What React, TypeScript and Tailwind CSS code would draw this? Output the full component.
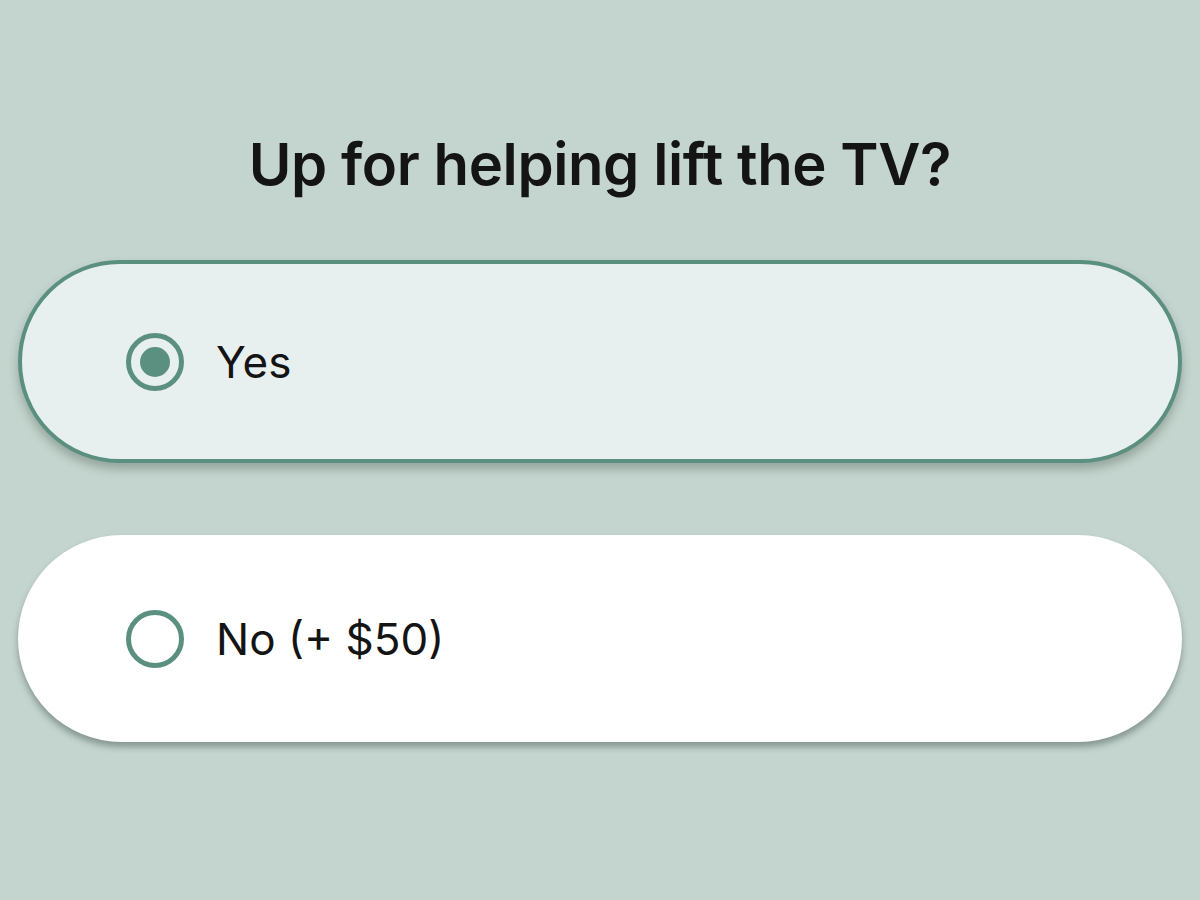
import { useState } from "react";

type Option = {
  id: string;
  label: string;
};

const options: Option[] = [
  { id: "yes", label: "Yes" },
  { id: "no", label: "No (+ $50)" },
];

function RadioDot({ checked }: { checked: boolean }) {
  return (
    <span className="flex h-[58px] w-[58px] shrink-0 items-center justify-center rounded-full border-[5px] border-[#5b9080]">
      {checked && <span className="h-[30px] w-[30px] rounded-full bg-[#5b9080]" />}
    </span>
  );
}

export default function App() {
  const [selected, setSelected] = useState("yes");

  return (
    <div className="flex h-[900px] w-full flex-col items-center bg-[#c4d4ce] px-[18px] font-['Inter',sans-serif] text-[#141414]">
      <h1 className="mt-[132px] text-[58px] font-semibold leading-[64px] tracking-[-0.4px]">
        Up for helping lift the TV?
      </h1>

      <div className="mt-[64px] flex w-full flex-col gap-[72px]">
        {options.map((option) => {
          const checked = selected === option.id;
          return (
            <button
              key={option.id}
              onClick={() => setSelected(option.id)}
              className={
                checked
                  ? "flex h-[203px] w-full items-center gap-[32px] rounded-full border-[4px] border-[#5b9080] bg-[#e8f0ef] pl-[104px] text-left shadow-[0_6px_10px_rgba(60,80,70,0.35)]"
                  : "flex h-[207px] w-full items-center gap-[32px] rounded-full bg-white pl-[108px] text-left shadow-[0_5px_6px_rgba(60,80,70,0.45)]"
              }
            >
              <RadioDot checked={checked} />
              <span className="text-[44px] font-normal">{option.label}</span>
            </button>
          );
        })}
      </div>
    </div>
  );
}
